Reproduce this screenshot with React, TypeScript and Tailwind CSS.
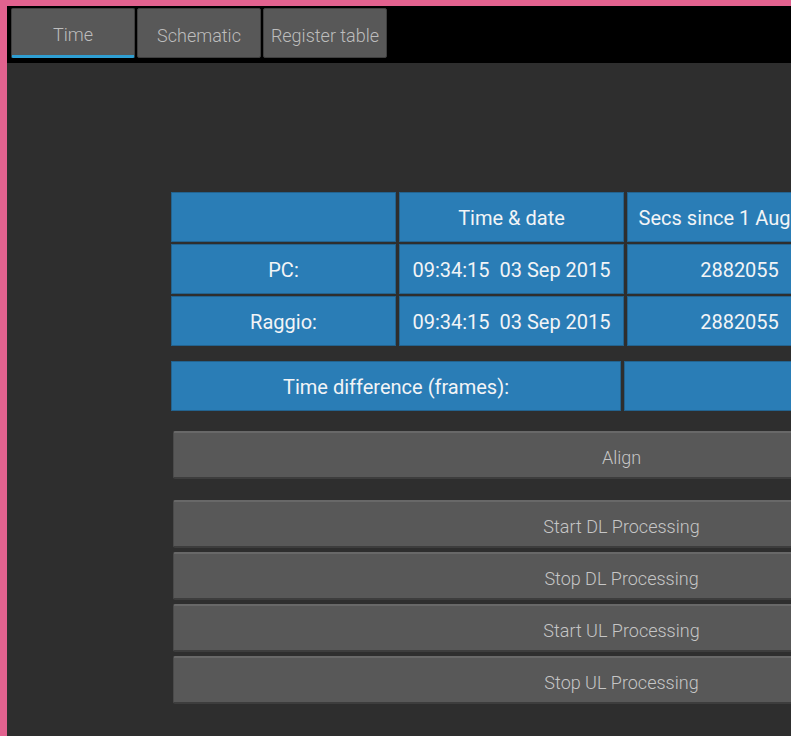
import React from "react";

const tabs = ["Time", "Schematic", "Register table"];

const rows = [
  { label: "PC:", time: "09:34:15  03 Sep 2015", secs: "2882055" },
  { label: "Raggio:", time: "09:34:15  03 Sep 2015", secs: "2882055" },
];

const actions = [
  "Start DL Processing",
  "Stop DL Processing",
  "Start UL Processing",
  "Stop UL Processing",
];

function Cell({ children, className = "" }: { children?: React.ReactNode; className?: string }) {
  return (
    <div
      className={
        "flex h-[50px] items-center justify-center whitespace-pre border border-[#23638f] bg-[#2a7db6] pt-[2px] text-[20px] font-normal text-[#f2f4f6] " +
        className
      }
    >
      {children}
    </div>
  );
}

function ActionButton({ label }: { label: string }) {
  return (
    <button className="flex h-[48px] w-[896px] shrink-0 items-center justify-center rounded-[2px] border-t-2 border-b-2 border-l border-t-[#686868] border-b-[#3d3d3d] border-l-[#4a4a4a] bg-[#585858] pt-[4px] text-[18px] font-light text-[#c6c6c6]">
      {label}
    </button>
  );
}

export default function App() {
  return (
    <div
      className="flex h-screen w-full overflow-hidden bg-[#e2628f] pl-[7px] pt-[6px]"
      style={{ fontFamily: "Roboto, 'Liberation Sans', sans-serif" }}
    >
      <div className="flex min-w-0 flex-1 flex-col">
        <div className="flex h-[57px] shrink-0 items-start gap-[2px] bg-black pl-[4px] pt-[2px]">
          {tabs.map((t, i) => (
            <div
              key={t}
              className={
                "flex h-[50px] w-[124px] items-center justify-center whitespace-nowrap rounded-[2px] border border-[#3f3f3f] bg-[#585858] pt-[4px] text-[18px] font-light text-[#bdbdbd] " +
                (i === 0 ? "border-b-[3px] border-b-[#2f9fd3]" : "")
              }
            >
              {t}
            </div>
          ))}
        </div>

        <div className="flex flex-1 flex-col bg-[#2e2e2e] pl-[164px] pt-[129px]">
          <div className="grid w-[909px] shrink-0 grid-cols-[225px_225px_225px_225px] gap-x-[3px] gap-y-[2px]">
            <Cell />
            <Cell>Time &amp; date</Cell>
            <Cell>Secs since 1 Aug 2015</Cell>
            <Cell />
            {rows.map((r) => (
              <React.Fragment key={r.label}>
                <Cell>{r.label}</Cell>
                <Cell>{r.time}</Cell>
                <Cell>{r.secs}</Cell>
                <Cell />
              </React.Fragment>
            ))}
          </div>

          <div className="mt-[15px] flex w-[909px] shrink-0 gap-[3px]">
            <Cell className="w-[450px]">Time difference (frames):</Cell>
            <Cell className="w-[450px]" />
          </div>

          <div className="mt-[20px] flex flex-col pl-[2px]">
            <ActionButton label="Align" />
            <div className="mt-[21px] flex flex-col gap-[4px]">
              {actions.map((a) => (
                <ActionButton key={a} label={a} />
              ))}
            </div>
          </div>
        </div>
      </div>
    </div>
  );
}
